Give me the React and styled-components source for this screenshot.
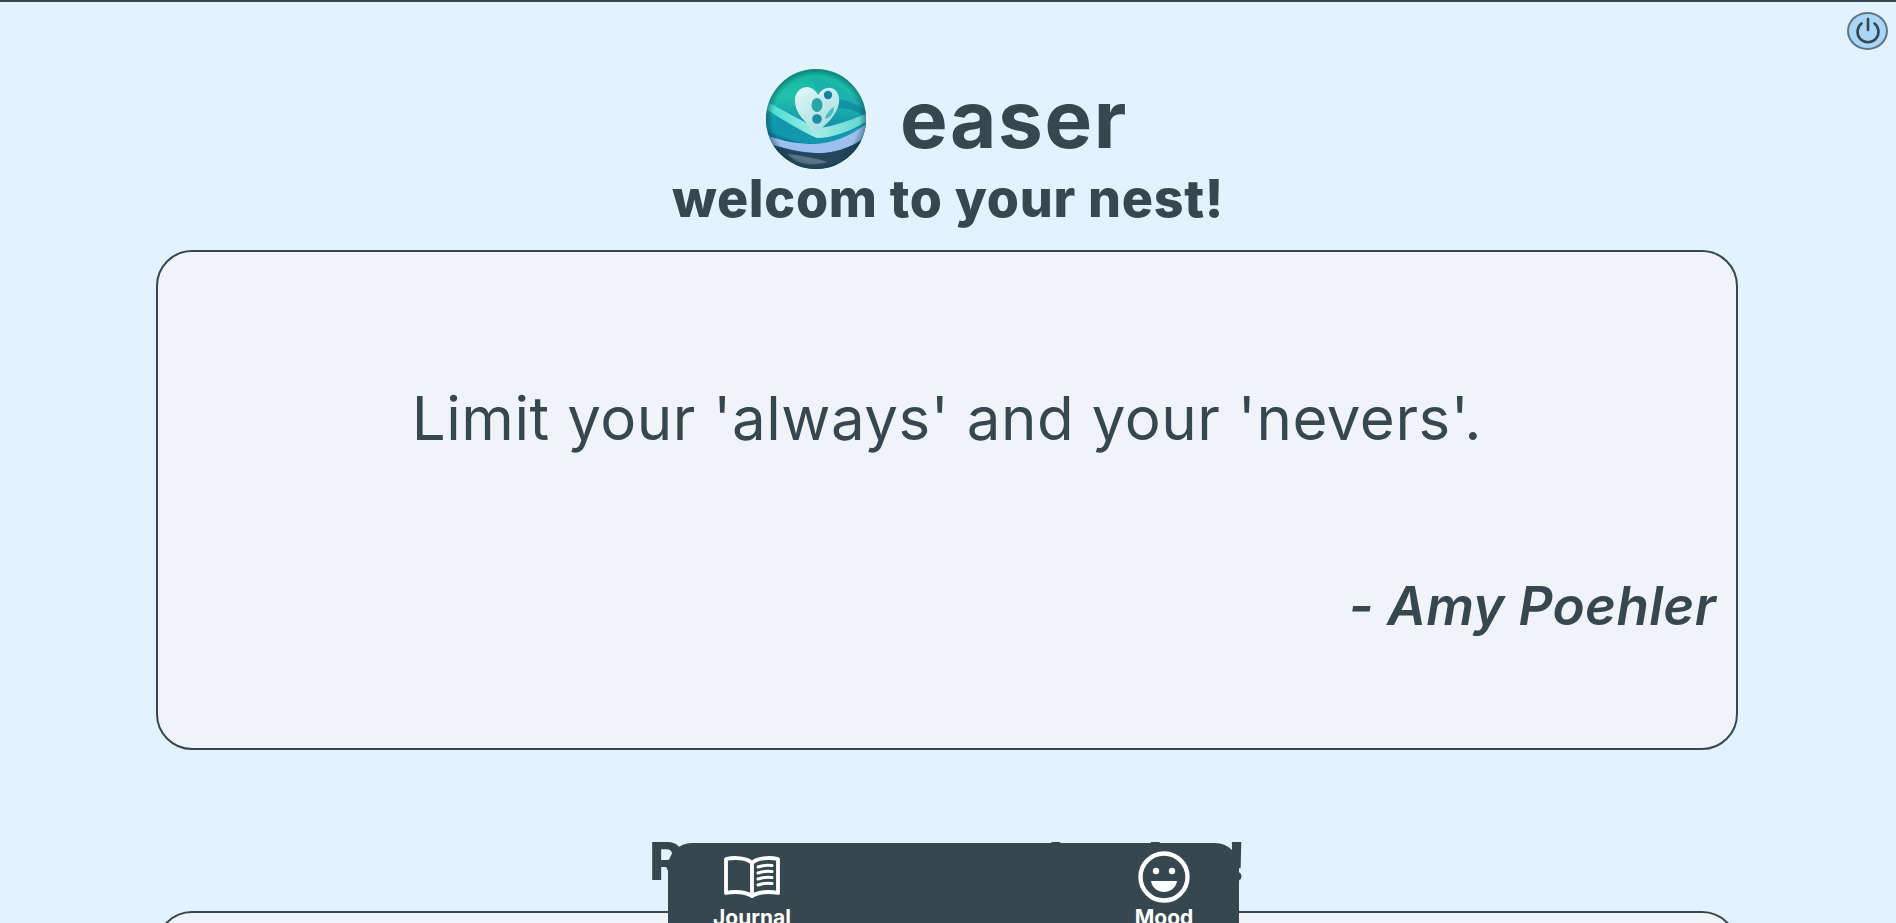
import React from 'react';
import styled, { createGlobalStyle } from 'styled-components';

const GlobalStyle = createGlobalStyle`
  html, body {
    margin: 0;
    padding: 0;
    height: 100%;
    overflow: hidden;
    background: #e3f2fd;
  }
  body {
    font-family: Inter, "Noto Sans", sans-serif;
    color: #37474f;
  }
`;

const Page = styled.div`
  border-top: 2px solid #37474f;
  display: flex;
  flex-direction: column;
  align-items: center;
`;

const Brand = styled.header`
  display: flex;
  align-items: center;
  justify-content: center;
  gap: 34px;
  margin-top: 67px;
  margin-right: 2px;
  height: 100px;
`;

const BrandName = styled.h1`
  margin: 0;
  font-size: 80px;
  line-height: 100px;
  font-weight: 700;
  letter-spacing: 1.6px;
`;

const Heading = styled.h2`
  margin: 0;
  font-size: 52px;
  line-height: 60px;
  font-weight: 800;
  letter-spacing: ${({ $spacing }) => $spacing}px;
  text-align: center;
`;

const Card = styled.section`
  box-sizing: border-box;
  width: 1582px;
  height: ${({ $height }) => $height}px;
  margin-top: ${({ $top }) => $top}px;
  margin-right: 2px;
  flex-shrink: 0;
  padding: 0 20px;
  display: flex;
  flex-direction: column;
  background: #f0f4f8;
  border: 2px solid #37474f;
  border-radius: 36px;
`;

const Quote = styled.p`
  margin: 128px 0 0;
  font-size: 60px;
  line-height: 76px;
  font-weight: 400;
  letter-spacing: 0.55px;
  text-align: center;
`;

const Author = styled.p`
  margin: 120px 0 0;
  font-size: 53px;
  line-height: 60px;
  font-weight: 600;
  font-style: italic;
  letter-spacing: 0.3px;
  text-align: right;
`;

const MoodHeading = styled.div`
  margin-top: 82px;
`;

const PowerButton = styled.button`
  position: fixed;
  top: 12px;
  right: 8px;
  width: 41px;
  height: 38px;
  padding: 0;
  display: flex;
  align-items: center;
  justify-content: center;
  background: #a9d5f7;
  border: 2px solid #5d7686;
  border-radius: 50%;
`;

const BottomNav = styled.nav`
  position: fixed;
  left: 668px;
  top: 843px;
  box-sizing: border-box;
  width: 571px;
  height: 120px;
  padding: 8px 35px 0 44px;
  display: flex;
  justify-content: space-between;
  background: #37474f;
  border-radius: 24px 24px 0 0;
`;

const NavItem = styled.a`
  width: 80px;
  display: flex;
  flex-direction: column;
  align-items: center;
  color: #ffffff;
  font-size: 21px;
  line-height: 22px;
  font-weight: 700;
  white-space: nowrap;
`;

const NavIcon = styled.span`
  height: 52px;
  margin-bottom: 4px;
  display: flex;
  align-items: center;
`;

const Logo = () => (
  <svg width="100" height="100" viewBox="0 0 100 100" aria-label="easer logo">
    <defs>
      <clipPath id="disc"><circle cx="50" cy="50" r="50" /></clipPath>
      <linearGradient id="sky" x1="0" y1="0" x2="0" y2="1">
        <stop offset="0" stopColor="#14b59f" />
        <stop offset="0.28" stopColor="#21c2ad" />
        <stop offset="0.55" stopColor="#1394ab" />
        <stop offset="1" stopColor="#0f6f8e" />
      </linearGradient>
      <linearGradient id="heart" x1="0" y1="0" x2="0.6" y2="1">
        <stop offset="0" stopColor="#e6f7f7" />
        <stop offset="1" stopColor="#a5dfe2" />
      </linearGradient>
      <linearGradient id="stripe" x1="0" y1="0" x2="1" y2="0">
        <stop offset="0" stopColor="#3fdcd0" />
        <stop offset="0.5" stopColor="#a6ece6" />
        <stop offset="1" stopColor="#5bd6cf" />
      </linearGradient>
      <linearGradient id="deep" x1="0" y1="0" x2="0" y2="1">
        <stop offset="0" stopColor="#1f3c58" />
        <stop offset="1" stopColor="#2f4b60" />
      </linearGradient>
      <radialGradient id="rim" cx="0.5" cy="0.5" r="0.5">
        <stop offset="0.86" stopColor="#0b3a48" stopOpacity="0" />
        <stop offset="1" stopColor="#0b3a48" stopOpacity="0.45" />
      </radialGradient>
    </defs>
    <g clipPath="url(#disc)">
      <rect width="100" height="100" fill="url(#sky)" />
      <path d="M45 8 C62 12 82 20 100 36 L100 46 C82 32 66 26 52 24Z" fill="#1ba7ae" opacity="0.55" />
      <path d="M66 30 C78 30 90 34 100 42 L100 48 C88 40 76 38 66 40Z" fill="#0f7f9f" opacity="0.65" />
      <path d="M0 44 L0 60 C18 68 36 76 52 76 C70 76 84 68 100 60 L100 50 L52 68Z" fill="#1198ac" />
      <path d="M0 32 C18 42 36 52 51 59 C66 58 82 52 100 45 L100 53 C82 63 66 69 51 69 C36 63 16 50 0 40Z" fill="url(#stripe)" />
      <path d="M0 62 C18 70 34 75 52 75 C68 74 84 67 100 56 L100 76 L0 76Z" fill="#0e7d99" />
      <path d="M0 66 C18 73 34 75 49 75 C64 74 82 69 100 55 L100 69 C80 81 62 85 49 84 C34 83 16 79 0 74Z" fill="#9dbfee" />
      <path d="M0 74 C16 79 34 84 49 84 C64 85 82 81 100 68 L100 100 L0 100Z" fill="url(#deep)" />
      <path d="M21 85 C34 86 48 89 62 93 C50 97 36 96 28 91Z" fill="#5a7488" />
      <path d="M51 63 C40 54 29 45 29 31 C29 22 36 18 41 18 C46 18 50 22 52 26 C55 21 60 18 65 19 C71 20 74 27 73 34 C71 46 60 56 51 63Z" fill="url(#heart)" />
      <ellipse cx="51" cy="36" rx="5.5" ry="7" fill="#2ba5a7" />
      <circle cx="62" cy="26" r="4.2" fill="#1780a4" />
      <circle cx="51" cy="50" r="4.8" fill="#1d8fa3" />
      <path d="M59 50 C60 44 65 40 68 38 C68 44 65 48 59 50Z" fill="#4db9c0" />
      <rect width="100" height="100" fill="url(#rim)" />
    </g>
  </svg>
);

const PowerIcon = () => (
  <svg width="30" height="30" viewBox="0 0 30 30" fill="none" stroke="#37474f" strokeWidth="2.6" strokeLinecap="round">
    <path d="M15 3 V14" />
    <path d="M8.5 7.5 A10.5 10.5 0 1 0 21.5 7.5" />
  </svg>
);

const BookIcon = () => (
  <svg width="58" height="44" viewBox="0 0 58 44" fill="none" stroke="#ffffff" strokeWidth="3.8" strokeLinejoin="round" strokeLinecap="round">
    <path d="M29 8 C24 3 12 2 3 4 V38 C12 36 23 37 29 41 C35 37 46 36 55 38 V4 C46 2 34 3 29 8Z" />
    <path d="M29 8 V41" />
    <path d="M35 12 C40 10 44 10 49 10.5" strokeWidth="3" />
    <path d="M35 18 C40 16 44 16 49 16.5" strokeWidth="3" />
    <path d="M35 24 C40 22 44 22 49 22.5" strokeWidth="3" />
    <path d="M35 30 C40 28 44 28 49 28.5" strokeWidth="3" />
  </svg>
);

const SmileIcon = () => (
  <svg width="52" height="52" viewBox="0 0 52 52">
    <circle cx="26" cy="26" r="23.5" fill="none" stroke="#ffffff" strokeWidth="4.4" />
    <circle cx="18" cy="20" r="3.2" fill="#ffffff" />
    <circle cx="34" cy="20" r="3.2" fill="#ffffff" />
    <path d="M13 30 H39 C38 37 32 41 26 41 C20 41 14 37 13 30Z" fill="#ffffff" />
  </svg>
);

const App = () => (
  <>
    <GlobalStyle />
    <Page>
      <Brand>
        <Logo />
        <BrandName>easer</BrandName>
      </Brand>
      <Heading $spacing={0.7}>welcom to your nest!</Heading>
      <Card $height={500} $top={21}>
        <Quote>Limit your 'always' and your 'nevers'.</Quote>
        <Author>- Amy Poehler</Author>
      </Card>
      <MoodHeading>
        <Heading $spacing={0.9}>Rate your mood today!</Heading>
      </MoodHeading>
      <Card $height={400} $top={19} />
    </Page>
    <PowerButton aria-label="Log out"><PowerIcon /></PowerButton>
    <BottomNav>
      <NavItem>
        <NavIcon><BookIcon /></NavIcon>
        Journal
      </NavItem>
      <NavItem>
        <NavIcon><SmileIcon /></NavIcon>
        Mood
      </NavItem>
    </BottomNav>
  </>
);

export default App;
